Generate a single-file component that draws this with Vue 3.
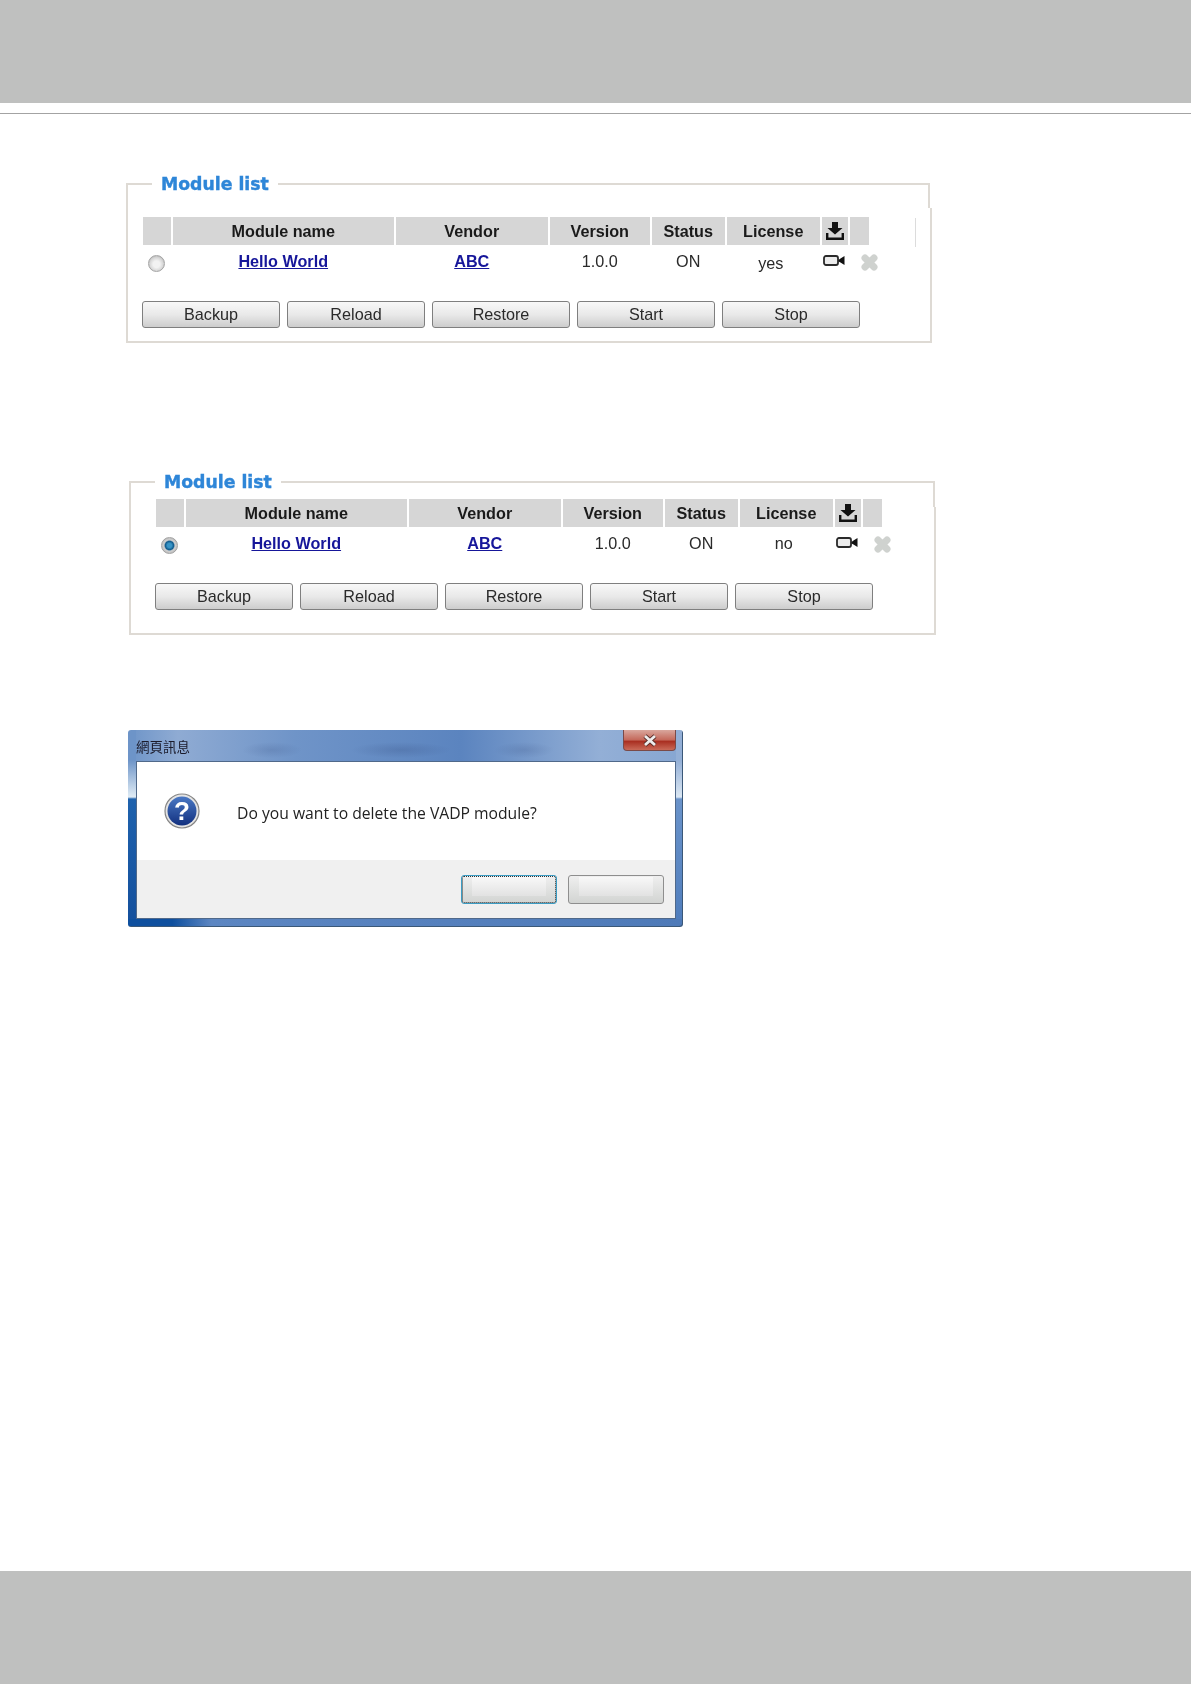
<template>
  <div class="page">
    <header class="top-band"></header>
    <div class="top-rule"></div>

    <section
      v-for="panel in panels"
      :key="panel.id"
      class="panel"
      :class="panel.id"
    >
      <h2 class="panel-title">Module list</h2>

      <div class="module-grid">
        <div v-for="(col, index) in columns" :key="index" class="head-cell">
          <svg v-if="col === 'download'" class="icon-download" viewBox="0 0 18 18">
            <path d="M6 0h6v6h4.500L9 12.500 1.500 6H6z" fill="#111" />
            <path d="M1.200 11v5.800h15.600V11" fill="none" stroke="#111" stroke-width="2.400" />
          </svg>
          <template v-else>{{ col }}</template>
        </div>

        <div class="row-cell">
          <span class="radio" :class="{ checked: panel.selected }"></span>
        </div>
        <div class="row-cell"><a class="link">Hello World</a></div>
        <div class="row-cell"><a class="link">ABC</a></div>
        <div class="row-cell">1.0.0</div>
        <div class="row-cell">ON</div>
        <div class="row-cell license" :class="panel.license">{{ panel.license }}</div>
        <div class="row-cell">
          <svg class="icon-camera" viewBox="0 0 22 11">
            <rect x="1" y="1" width="14" height="9" rx="2" fill="#ececec" stroke="#2a2a2a" stroke-width="1.800" />
            <path d="M15.500 5l2-1.500 4-2.500v9l-4-2.500-2-1z" fill="#111" />
          </svg>
        </div>
        <div class="row-cell">
          <svg class="icon-remove" viewBox="0 0 17 17">
            <path
              d="M4 4 13 13M13 4 4 13"
              fill="none"
              stroke="#cfd2cf"
              stroke-width="7"
              stroke-linecap="round"
            />
          </svg>
        </div>
      </div>

      <div class="actions">
        <button v-for="label in actions" :key="label" class="action-btn">{{ label }}</button>
      </div>
    </section>

    <div class="dialog">
      <div class="dialog-titlebar">
        <span class="dialog-title">網頁訊息</span>
        <span class="dialog-close">
          <svg viewBox="0 0 16 13" class="close-x">
            <path d="M3 2 13 11M13 2 3 11" stroke="#5b2f2a" stroke-width="4.500" />
            <path d="M3 2 13 11M13 2 3 11" stroke="#eeeeee" stroke-width="2.800" />
          </svg>
        </span>
      </div>
      <div class="dialog-body">
        <div class="dialog-message">
          <svg class="icon-question" viewBox="0 0 36 36">
            <defs>
              <linearGradient id="qfill" x1="0" y1="0" x2="0" y2="1">
                <stop offset="0" stop-color="#4a78c4" />
                <stop offset="1" stop-color="#12307f" />
              </linearGradient>
            </defs>
            <circle cx="18" cy="18" r="17" fill="#e4e4e4" stroke="#858585" stroke-width="1.200" />
            <circle cx="18" cy="18" r="14.500" fill="url(#qfill)" />
            <text x="18" y="27" text-anchor="middle" class="question-mark">?</text>
          </svg>
          <span class="dialog-text">Do you want to delete the VADP module?</span>
        </div>
        <div class="dialog-footer">
          <button class="dialog-btn focused"><span></span></button>
          <button class="dialog-btn"><span></span></button>
        </div>
      </div>
    </div>

    <footer class="bottom-band"></footer>
  </div>
</template>

<script setup>
  const columns = ["", "Module name", "Vendor", "Version", "Status", "License", "download", ""];
  const actions = ["Backup", "Reload", "Restore", "Start", "Stop"];

  const panels = [
    { id: "panel-first", license: "yes", selected: false },
    { id: "panel-second", license: "no", selected: true },
  ];
</script>

<style>
  html,
  body {
    margin: 0;
    background: #fff;
  }
</style>

<style scoped>
  .page {
    display: flex;
    flex-direction: column;
    width: 1191px;
    min-height: 1684px;
    background: #fff;
    font-family: "Liberation Sans", Arial, sans-serif;
    overflow: hidden;
  }

  .top-band {
    height: 103px;
    background: #bfc0bf;
  }

  .top-rule {
    height: 1px;
    margin-top: 10px;
    background: #a3a3a3;
  }

  .panel {
    position: relative;
    box-sizing: border-box;
    border: 2px solid #dedad4;
    filter: blur(0.3px);
  }

  .panel-first {
    width: 806px;
    height: 160px;
    margin: 69px 0 0 126px;
    padding: 32px 0 0 15px;
  }

  .panel-second {
    width: 807px;
    height: 154px;
    margin: 138px 0 0 129px;
    padding: 16px 0 0 25px;
  }

  /* the grabbed panels have a small step in their right border */
  .panel::after {
    content: "";
    position: absolute;
    top: -2px;
    right: -2px;
    width: 2px;
    height: 25px;
    background: #fff;
    border-left: 2px solid #dedad4;
  }

  .panel-second::after {
    width: 1px;
    height: 26px;
  }

  .panel-title {
    position: absolute;
    top: -13px;
    left: 24px;
    margin: 0;
    padding: 0 9px 0 9px;
    background: #fff;
    color: #2e86d8;
    font-family: "DejaVu Sans", Verdana, sans-serif;
    font-size: 17.300px;
    line-height: 24px;
    font-weight: 700;
    -webkit-text-stroke: 0.4px #2e86d8;
  }

  .module-grid {
    position: relative;
    display: grid;
    grid-template-columns: 27.5px 220.5px 151.5px 99.5px 72.5px 92.5px 25.5px 19px;
    column-gap: 2.5px;
    width: max-content;
    font-size: 16.2px;
    color: #2a2a2a;
  }

  .panel-first .module-grid::after {
    content: "";
    position: absolute;
    top: 1px;
    left: 772px;
    width: 1px;
    height: 29px;
    background: #dcdcdc;
  }

  .head-cell {
    display: flex;
    align-items: center;
    justify-content: center;
    height: 28px;
    background: #d6d6d6;
    font-weight: 700;
    color: #1a1a1a;
    white-space: nowrap;
  }

  .row-cell {
    height: 56px;
    padding-top: 7px;
    box-sizing: border-box;
    line-height: 18px;
    text-align: center;
    white-space: nowrap;
  }

  .link {
    color: #16169a;
    font-weight: 700;
    text-decoration: underline;
  }

  .license {
    padding-right: 5px;
  }

  .license.yes {
    padding-top: 9px;
  }

  .radio {
    display: block;
    box-sizing: border-box;
    width: 17px;
    height: 17px;
    margin: 3px 0 0 5px;
    border-radius: 50%;
    border: 1px solid #a4a4a4;
    background: radial-gradient(circle at 50% 55%, #f2f2f2 0 30%, #d8d8d8 58%, #bcbcbc 78%);
  }

  .radio.checked {
    border-color: #a0a0a0;
    background: radial-gradient(circle at 50% 50%, #3794c6 0 20%, #0f5a8c 40%, #cfcfcf 52%, #b4b4b4 90%);
  }

  .icon-download {
    display: block;
    width: 18px;
    height: 18px;
  }

  .icon-camera {
    display: block;
    width: 22px;
    height: 11px;
    margin: 3px 0 0 1px;
  }

  .icon-remove {
    display: block;
    width: 17px;
    height: 17px;
    margin: 2px 0 0 11px;
  }

  .actions {
    display: flex;
    gap: 7px;
    margin-left: -1px;
  }

  .action-btn {
    width: 138px;
    height: 27px;
    padding: 0;
    border: 1px solid #7f7f7f;
    border-radius: 3px;
    background: linear-gradient(#f8f8f8, #e9e9e9 50%, #cdcdcd);
    font-family: inherit;
    font-size: 16.2px;
    color: #2a2a2a;
  }

  .dialog {
    display: flex;
    flex-direction: column;
    box-sizing: border-box;
    width: 555px;
    height: 197px;
    margin: 95px 0 0 128px;
    padding: 0 7px 8px 8px;
    border-radius: 3px;
    background:
      linear-gradient(90deg, #0e4f9e 0 8%, #5c86c2 15%, #4e7ab8) bottom / 100% 8px no-repeat,
      linear-gradient(#6d94c8 0, #6d94c8 30px, #e0ecf5 67px, #1f62ad 69px, #144f9c) left / 8px 100% no-repeat,
      linear-gradient(#93afd6 0, #93afd6 30px, #dbe7f3 67px, #6a93ca 69px, #4f7dbc) right / 7px 100% no-repeat,
      linear-gradient(90deg, #6d94c8, #8fabd3 9%, #6f94c8 30%, #5b84bf 60%, #93afd6 85%, #86a6d2);
    box-shadow: inset -1px -1px 0 #3b5878;
  }

  .dialog-titlebar {
    position: relative;
    display: flex;
    align-items: center;
    height: 31px;
    flex: none;
    background:
      radial-gradient(ellipse 30px 8px at 136px 20px, rgba(40, 60, 110, 0.16), transparent),
      radial-gradient(ellipse 50px 8px at 265px 20px, rgba(40, 60, 110, 0.2), transparent),
      radial-gradient(ellipse 30px 8px at 388px 20px, rgba(40, 60, 110, 0.16), transparent);
  }

  .dialog-title {
    font-family: "Noto Sans CJK TC", sans-serif;
    font-size: 13.500px;
    color: #1b1b2b;
    filter: blur(0.3px);
  }

  .dialog-close {
    position: absolute;
    top: 0;
    right: 0;
    display: flex;
    align-items: center;
    justify-content: center;
    box-sizing: border-box;
    width: 53px;
    height: 21px;
    border: 1px solid #7a4a48;
    border-top: 0;
    border-radius: 0 0 4px 4px;
    background: linear-gradient(#d9a79d, #c4685a 50%, #a92e20 56%, #c96a58);
  }

  .close-x {
    width: 16px;
    height: 13px;
  }

  .dialog-body {
    display: flex;
    flex-direction: column;
    flex: 1;
    border: 1px solid #50698a;
    background: #fff;
  }

  .dialog-message {
    display: flex;
    align-items: center;
    gap: 37px;
    height: 98px;
    padding-left: 27px;
    font-family: "Open Sans", "Noto Sans", sans-serif;
    font-size: 15.700px;
    color: #222;
    filter: blur(0.3px);
  }

  .dialog-text {
    padding-top: 4px;
  }

  .icon-question {
    width: 36px;
    height: 36px;
  }

  .question-mark {
    font-family: "Liberation Sans", Arial, sans-serif;
    font-size: 26px;
    font-weight: 700;
    fill: #fff;
  }

  .dialog-footer {
    display: flex;
    justify-content: flex-end;
    gap: 11px;
    flex: 1;
    padding: 15px 11px 0 0;
    background: #f0f0f0;
  }

  .dialog-btn {
    display: flex;
    box-sizing: border-box;
    width: 96px;
    height: 29px;
    padding: 1px 10px 7px;
    border: 1px solid #8e8e8e;
    border-radius: 3px;
    background: linear-gradient(#efefef, #d2d4d2);
  }

  .dialog-btn span {
    flex: 1;
    background: linear-gradient(#f8f8f8, #e2e2e2);
  }

  .dialog-btn.focused {
    border-color: #3a9cc4;
    outline: 1px dotted #333;
    outline-offset: -2px;
  }

  .bottom-band {
    height: 113px;
    margin-top: auto;
    background: #bfc0bf;
  }
</style>
